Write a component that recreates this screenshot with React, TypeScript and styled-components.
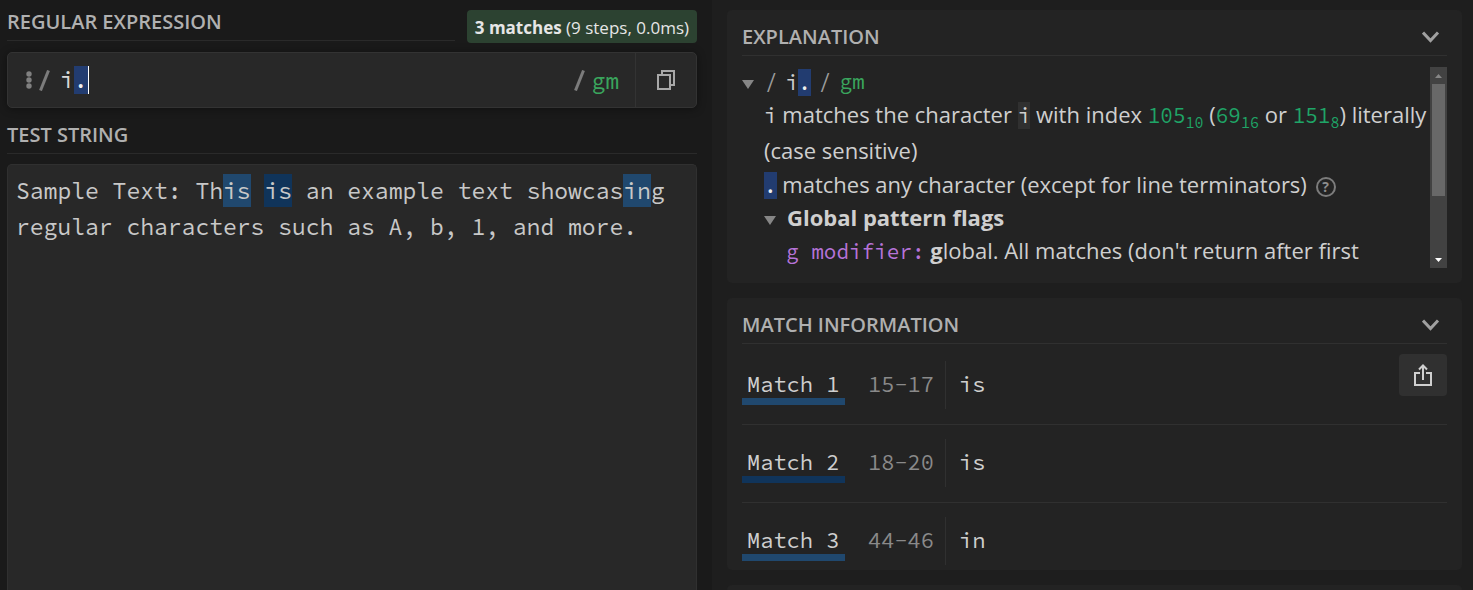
import React from "react";
import styled, { createGlobalStyle } from "styled-components";

const sans = `"Open Sans", "Noto Sans", sans-serif`;
const mono = `"Source Code Pro", "Noto Sans Mono CJK SC", "Liberation Mono", monospace`;

const GlobalStyle = createGlobalStyle`
  *, *::before, *::after { box-sizing: border-box; }
  body {
    margin: 0;
    background: #1a1a1a;
    color: #cfcfcf;
    font-family: ${sans};
    font-size: 22px;
    overflow: hidden;
  }
  button { font: inherit; color: inherit; background: none; border: 0; padding: 0; cursor: pointer; }
  h2, h3, p { margin: 0; }
`;

const Page = styled.div`
  display: grid;
  grid-template-columns: 712fr 761fr;
  height: 100vh;
`;

const Workspace = styled.main`
  display: flex;
  flex-direction: column;
  min-width: 0;
  padding: 0 15px 0 7px;
`;

const Sidebar = styled.aside`
  display: flex;
  flex-direction: column;
  gap: 15px;
  min-width: 0;
  padding: 10px 11px 0 15px;
  background: #1e1e1e;
  overflow: hidden;
`;

const SectionTitle = styled.h2`
  font-size: 20px;
  font-weight: 600;
  line-height: 36px;
  color: #b0b0b0;
  text-transform: uppercase;
`;

const RuledTitle = styled(SectionTitle)`
  flex: 1;
  border-bottom: 1px solid #2a2a2a;
`;

const TitleRow = styled.div<{ $top: number; $bottom: number }>`
  display: flex;
  align-items: flex-start;
  gap: 12px;
  padding: ${(p) => p.$top}px 0 ${(p) => p.$bottom}px;
`;

const ResultBadge = styled.div`
  height: 33px;
  margin: 6px 0 -8px;
  padding: 0 8px;
  border-radius: 4px;
  background: #2c4231;
  color: #e6e6e6;
  font-size: 17px;
  line-height: 36px;
  white-space: nowrap;
`;

const RegexBar = styled.div`
  display: flex;
  align-items: center;
  height: 56px;
  flex: none;
  border: 1px solid #333;
  border-radius: 5px;
  background: #282828;
  box-shadow: 0 1px 8px rgba(0, 0, 0, 0.4);
  font-family: ${mono};
  font-size: 23px;
`;

const DelimiterButton = styled.button`
  display: flex;
  align-items: center;
  gap: 7px;
  padding-left: 18px;
  color: #808080;
`;

const RegexEditor = styled.div`
  flex: 1;
  display: flex;
  align-items: center;
  padding-left: 10px;
  line-height: 28px;
  color: #d8d8d8;
  outline: none;
`;

const RegexToken = styled.span<{ $marked?: boolean }>`
  height: 28px;
  background: ${(p) => (p.$marked ? "#223c70" : "transparent")};
  color: ${(p) => (p.$marked ? "#eee" : "inherit")};
`;

const Caret = styled.span`
  width: 1px;
  height: 28px;
  background: #fff;
`;

const FlagsButton = styled.button`
  display: flex;
  align-items: center;
  gap: 6px;
  padding-right: 16px;
  color: #3aa55d;
`;

const CopyButton = styled.button`
  display: flex;
  align-items: center;
  justify-content: center;
  align-self: stretch;
  width: 61px;
  border-left: 1px solid #333;
`;

const TestEditor = styled.div`
  flex: 1;
  padding: 8px;
  border: 1px solid #303030;
  border-bottom: 0;
  border-radius: 5px 5px 0 0;
  background: #282828;
  color: #c8c8c8;
  font-family: ${mono};
  font-size: 23px;
  line-height: 36px;
  white-space: pre-wrap;
  outline: none;
`;

const Match = styled.mark<{ $alt?: boolean }>`
  padding: 2px 0;
  background: ${(p) => (p.$alt ? "#10345a" : "#20486e")};
  color: inherit;
`;

const Panel = styled.section<{ $bottom: number }>`
  position: relative;
  flex: none;
  padding: 9px 15px ${(p) => p.$bottom}px;
  border-radius: 5px;
  background: #232323;
`;

const PanelHeader = styled.header`
  display: flex;
  align-items: center;
  justify-content: space-between;
  height: 37px;
  padding-right: 7px;
  border-bottom: 1px solid #303030;
`;

const IconButton = styled.button`
  display: flex;
`;

const ScrollArea = styled.div`
  display: flex;
  height: 201px;
  margin-top: 11px;
  overflow: hidden;
`;

const Tree = styled.div`
  flex: 1;
  min-width: 0;
`;

const Node = styled.div<{ $level?: number; $line?: number }>`
  padding-left: ${(p) => (p.$level || 0) * 22}px;
  line-height: ${(p) => p.$line || 33}px;
  white-space: nowrap;
`;

const Summary = styled.div<{ $gap: number }>`
  display: flex;
  align-items: center;
  gap: ${(p) => p.$gap}px;
`;

const RootSummary = styled(Summary)`
  height: 29px;
`;

const tones = {
  hit: "#eee",
  soft: "#cfcfcf",
  number: "#1fa567",
  flag: "#3aa55d",
  modifier: "#b673d8",
  dim: "#9c9c9c",
};

const Code = styled.code<{ $tone?: keyof typeof tones }>`
  font-family: ${mono};
  font-size: 21px;
  line-height: 27px;
  display: inline-block;
  color: ${(p) => tones[p.$tone || "soft"]};
  background: ${(p) => (p.$tone === "hit" ? "#223c70" : "transparent")};
`;

const Chip = styled(Code)`
  background: #303030;
`;

const Sub = styled.sub`
  font-family: ${mono};
  font-size: 15px;
  line-height: 0;
  color: #1fa567;
`;

const Help = styled.button`
  width: 20px;
  height: 20px;
  margin-left: 3px;
  border: 2px solid #7c7c7c;
  border-radius: 50%;
  color: #8c8c8c;
  font-size: 14px;
  font-weight: 700;
  line-height: 16px;
  vertical-align: middle;
`;

const ScrollBar = styled.div`
  display: flex;
  flex-direction: column;
  align-items: center;
  justify-content: space-between;
  width: 17px;
  background: #424242;
`;

const ScrollThumb = styled.div`
  width: 13px;
  height: 112px;
  margin-bottom: auto;
  background: #686868;
`;

const ScrollArrow = styled.button<{ $up?: boolean }>`
  display: flex;
  align-items: center;
  justify-content: center;
  width: 17px;
  height: 17px;
  color: ${(p) => (p.$up ? "#868686" : "#fff")};
`;

const ShareButton = styled.button`
  position: absolute;
  top: 56px;
  right: 15px;
  display: flex;
  align-items: center;
  justify-content: center;
  width: 48px;
  height: 42px;
  border-radius: 4px;
  background: #303030;
`;

const MatchTable = styled.table`
  width: 100%;
  margin-top: 3px;
  border-collapse: collapse;
  font-family: ${mono};
  font-size: 22px;
  line-height: 46px;
  text-align: left;
  white-space: nowrap;
`;

const MatchRow = styled.tr`
  & + & { border-top: 1px solid #303030; }
  th, td { padding: 14px 0 15px; font-weight: 400; vertical-align: top; }
  &:last-child th, &:last-child td { padding-bottom: 0; }
`;

const MatchLabel = styled.div<{ $alt?: boolean }>`
  height: 44px;
  padding: 0 5px;
  border-bottom: 7px solid ${(p) => (p.$alt ? "#10345a" : "#20486e")};
`;

const MatchRange = styled.div`
  height: 48px;
  padding-right: 11px;
  border-right: 1px solid #303030;
  color: #8a8a8a;
  text-align: right;
`;

const LabelCell = styled.th`
  width: 103px;
`;
const RangeCell = styled.td`
  width: 101px;
`;
const TextCell = styled.td`
  && { padding-left: 13px; }
`;

const Chevron = () => (
  <svg width="18" height="12" viewBox="0 0 18 12" fill="none" stroke="#a0a0a0" strokeWidth="3">
    <path d="M1 1.5 8.5 9.5l7.5-8" />
  </svg>
);

const Slash = () => (
  <svg width="11" height="21" viewBox="0 0 11 21" fill="none" stroke="#7c7c7c" strokeWidth="3">
    <path d="M1.5 20.5 9.5.5" />
  </svg>
);

const Triangle = () => (
  <svg width="12" height="14" viewBox="0 0 12 14" fill="#868686">
    <path d="M0 5h12l-6 9z" />
  </svg>
);

const matches = [
  { range: "15-17", text: "is" },
  { range: "18-20", text: "is" },
  { range: "44-46", text: "in" },
];

export default function App() {
  return (
    <>
      <GlobalStyle />
      <Page>
        <Workspace>
          <TitleRow $top={4} $bottom={11}>
            <RuledTitle id="regex-title">Regular Expression</RuledTitle>
            <ResultBadge>
              <b>3 matches</b> (9 steps, 0.0ms)
            </ResultBadge>
          </TitleRow>
          <RegexBar>
            <DelimiterButton aria-label="Change delimiter">
              <svg width="6" height="18" viewBox="0 0 6 18" fill="#808080">
                <circle cx="3" cy="3" r="2.7" />
                <circle cx="3" cy="9" r="2.7" />
                <circle cx="3" cy="15" r="2.7" />
              </svg>
              <Slash />
            </DelimiterButton>
            <RegexEditor role="textbox" aria-labelledby="regex-title" contentEditable suppressContentEditableWarning>
              <RegexToken>i</RegexToken>
              <RegexToken $marked>.</RegexToken>
              <Caret />
            </RegexEditor>
            <FlagsButton aria-label="Set regex options">
              <Slash />
              <span>gm</span>
            </FlagsButton>
            <CopyButton aria-label="Copy to clipboard">
              <svg width="18" height="20" viewBox="0 0 18 20" fill="none" stroke="#a8a8a8" strokeWidth="2">
                <path d="M5 4V1h12v14h-3" />
                <path d="M1 5h12v14H1z" />
              </svg>
            </CopyButton>
          </RegexBar>
          <TitleRow $top={9} $bottom={10}>
            <RuledTitle id="test-title">Test String</RuledTitle>
          </TitleRow>
          <TestEditor role="textbox" aria-multiline aria-labelledby="test-title" contentEditable suppressContentEditableWarning>
            Sample Text: Th<Match>is</Match> <Match $alt>is</Match> an example text showcas<Match>in</Match>g regular characters such as A, b, 1, and more.
          </TestEditor>
        </Workspace>

        <Sidebar>
          <Panel $bottom={15}>
            <PanelHeader>
              <SectionTitle>Explanation</SectionTitle>
              <IconButton aria-label="Collapse explanation">
                <Chevron />
              </IconButton>
            </PanelHeader>
            <ScrollArea>
              <Tree>
                <Node>
                  <RootSummary $gap={11}>
                    <Triangle />
                    <Summary $gap={8}>
                      <Code $tone="dim">/</Code>
                      <span>
                        <Code>i</Code>
                        <Code $tone="hit">.</Code>
                      </span>
                      <Code $tone="dim">/</Code>
                      <Code $tone="flag">gm</Code>
                    </Summary>
                  </RootSummary>
                </Node>
                <Node $level={1} $line={36}>
                  <Code>i</Code> matches the character <Chip>i</Chip> with index <Code $tone="number">105</Code>
                  <Sub>10</Sub> (<Code $tone="number">69</Code>
                  <Sub>16</Sub> or <Code $tone="number">151</Code>
                  <Sub>8</Sub>) literally
                  <br />
                  (case sensitive)
                </Node>
                <Node $level={1}>
                  <Code $tone="hit">.</Code> matches any character (except for line terminators){" "}
                  <Help aria-label="More about the dot token">?</Help>
                </Node>
                <Node $level={1}>
                  <Summary $gap={11}>
                    <Triangle />
                    <b>Global pattern flags</b>
                  </Summary>
                </Node>
                <Node $level={2}>
                  <Code $tone="modifier">g modifier:</Code> <b>g</b>lobal. All matches (don't return after first
                </Node>
              </Tree>
              <ScrollBar>
                <ScrollArrow $up aria-label="Scroll up">
                  <svg width="7" height="4" viewBox="0 0 7 4" fill="currentColor"><path d="M0 4h7L3.5 0z" /></svg>
                </ScrollArrow>
                <ScrollThumb />
                <ScrollArrow aria-label="Scroll down">
                  <svg width="7" height="4" viewBox="0 0 7 4" fill="currentColor"><path d="M0 0h7L3.5 4z" /></svg>
                </ScrollArrow>
              </ScrollBar>
            </ScrollArea>
          </Panel>

          <Panel $bottom={5}>
            <PanelHeader>
              <SectionTitle>Match Information</SectionTitle>
              <IconButton aria-label="Collapse match information">
                <Chevron />
              </IconButton>
            </PanelHeader>
            <MatchTable>
              <tbody>
                {matches.map((m, i) => (
                  <MatchRow key={m.range}>
                    <LabelCell scope="row">
                      <MatchLabel $alt={i % 2 === 1}>Match {i + 1}</MatchLabel>
                    </LabelCell>
                    <RangeCell>
                      <MatchRange>{m.range}</MatchRange>
                    </RangeCell>
                    <TextCell>{m.text}</TextCell>
                  </MatchRow>
                ))}
              </tbody>
            </MatchTable>
            <ShareButton aria-label="Export matches">
              <svg width="18" height="22" viewBox="0 0 18 22" fill="none" stroke="#cfcfcf" strokeWidth="2">
                <path d="M6 9H1v12h16V9h-5M9 16V2M5 5.5 9 1.5l4 4" />
              </svg>
            </ShareButton>
          </Panel>

          <Panel $bottom={15}>
            <PanelHeader />
          </Panel>
        </Sidebar>
      </Page>
    </>
  );
}
